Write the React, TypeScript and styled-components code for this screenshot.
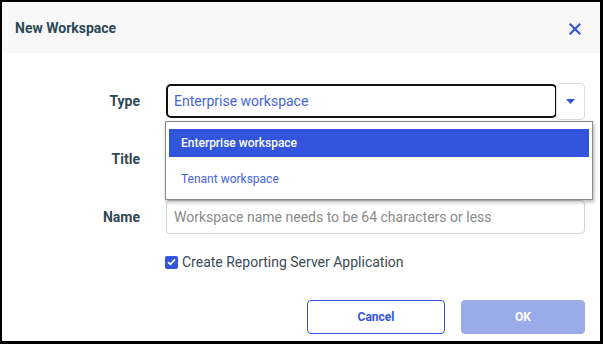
import styled, { createGlobalStyle } from 'styled-components';

const GlobalStyle = createGlobalStyle`
  html, body {
    margin: 0;
    padding: 0;
    background: #fff;
  }
  body {
    font-family: Roboto, 'Liberation Sans', sans-serif;
  }
`;

const blue = '#3355dd';
const slate = '#2f4855';

const App = () => {
  return (
    <>
      <GlobalStyle />
      <Dialog>
        <Header>
          <HeaderTitle>New Workspace</HeaderTitle>
          <CloseButton aria-label="Close">
            <svg width="12" height="12" viewBox="0 0 12 12">
              <path d="M1.5 1.5 L10.5 10.5 M10.5 1.5 L1.5 10.5" stroke={blue} strokeWidth="2.2" strokeLinecap="square" />
            </svg>
          </CloseButton>
        </Header>
        <Body>
          <FormRow>
            <Label>Type</Label>
            <Field>
              <SelectBox>Enterprise workspace</SelectBox>
              <ArrowButton>
                <svg width="9" height="5" viewBox="0 0 9 5">
                  <path d="M0 0 H9 L4.5 5 Z" fill={blue} />
                </svg>
              </ArrowButton>
              <Menu>
                <MenuItem $active>Enterprise workspace</MenuItem>
                <MenuItem>Tenant workspace</MenuItem>
              </Menu>
            </Field>
          </FormRow>
          <FormRow>
            <Label>Title</Label>
            <Field>
              <TextInput placeholder="" />
            </Field>
          </FormRow>
          <FormRow>
            <Label>Name</Label>
            <Field>
              <TextInput placeholder="Workspace name needs to be 64 characters or less" />
            </Field>
          </FormRow>
          <CheckRow>
            <CheckBox>
              <svg width="9" height="8" viewBox="0 0 9 8">
                <path d="M1 4.2 L3.4 6.4 L8 1.4" stroke="#fff" strokeWidth="1.6" fill="none" />
              </svg>
            </CheckBox>
            <CheckLabel>Create Reporting Server Application</CheckLabel>
          </CheckRow>
        </Body>
        <Footer>
          <Button>Cancel</Button>
          <Button $primary>OK</Button>
        </Footer>
      </Dialog>
    </>
  );
};

export default App;

const Dialog = styled.div`
  width: 603px;
  height: 344px;
  box-sizing: border-box;
  border: solid #000;
  border-width: 2px 3px 3px 2px;
  background: #fff;
  display: flex;
  flex-direction: column;
`;

const Header = styled.div`
  height: 51px;
  flex-shrink: 0;
  background: #f8f8f8;
  display: flex;
  align-items: center;
  justify-content: space-between;
  padding: 0 19px 0 13px;
`;

const HeaderTitle = styled.div`
  font-size: 14px;
  font-weight: 700;
  color: ${slate};
`;

const CloseButton = styled.div`
  width: 12px;
  height: 12px;
  display: flex;
  margin-top: 2px;
`;

const Body = styled.div`
  display: flex;
  flex-direction: column;
  gap: 22px;
  padding: 30px 15px 0 0;
`;

const FormRow = styled.div`
  display: grid;
  grid-template-columns: 138px 1fr;
  column-gap: 26px;
  height: 36px;
  align-items: center;
`;

const Label = styled.div`
  text-align: right;
  font-size: 14px;
  font-weight: 700;
  color: ${slate};
`;

const Field = styled.div`
  position: relative;
  display: flex;
  align-items: center;
  height: 36px;
`;

const SelectBox = styled.div`
  flex: 1;
  height: 34px;
  box-sizing: border-box;
  border: 2px solid #111;
  border-radius: 5px;
  padding: 0 6px;
  display: flex;
  align-items: center;
  font-size: 14px;
  color: #4563de;
`;

const ArrowButton = styled.div`
  width: 29px;
  height: 37px;
  box-sizing: border-box;
  margin-left: -1px;
  border: 1px solid #dcdcdc;
  border-radius: 4px;
  display: flex;
  align-items: center;
  justify-content: center;
`;

const Menu = styled.div`
  position: absolute;
  left: -1px;
  top: 38px;
  width: 428px;
  height: 79px;
  box-sizing: border-box;
  border: 1px solid #8a8a8a;
  background: #fff;
  box-shadow: 1px 2px 4px rgba(0, 0, 0, 0.3);
  padding: 7px 3px;
  display: flex;
  flex-direction: column;
  gap: 8px;
  z-index: 2;
`;

const MenuItem = styled.div<{ $active?: boolean }>`
  height: 28px;
  flex-shrink: 0;
  display: flex;
  align-items: center;
  padding-left: 12px;
  font-size: 12px;
  font-weight: ${(p) => (p.$active ? 500 : 400)};
  background: ${(p) => (p.$active ? blue : 'transparent')};
  color: ${(p) => (p.$active ? '#fff' : '#4563de')};
`;

const TextInput = styled.input`
  width: 100%;
  height: 34px;
  box-sizing: border-box;
  border: 1px solid #d4d4d4;
  border-radius: 4px;
  padding: 0 7px;
  font-family: Roboto, 'Liberation Sans', sans-serif;
  font-size: 14px;
  color: #333;
  outline: none;

  &::placeholder {
    color: #8a8a8a;
  }
`;

const CheckRow = styled.div`
  display: flex;
  align-items: center;
  gap: 4px;
  height: 20px;
  margin-top: -5px;
  padding-left: 163px;
`;

const CheckBox = styled.div`
  width: 13px;
  height: 13px;
  border-radius: 2px;
  background: ${blue};
  display: flex;
  align-items: center;
  justify-content: center;
`;

const CheckLabel = styled.div`
  font-size: 14px;
  color: #3d4a52;
`;

const Footer = styled.div`
  display: flex;
  justify-content: flex-end;
  gap: 16px;
  padding: 28px 15px 0 0;
`;

const Button = styled.div<{ $primary?: boolean }>`
  width: ${(p) => (p.$primary ? 124 : 138)}px;
  height: 34px;
  box-sizing: border-box;
  border-radius: 4px;
  border: 1px solid ${(p) => (p.$primary ? '#9aabea' : blue)};
  background: ${(p) => (p.$primary ? '#9aabea' : '#fff')};
  color: ${(p) => (p.$primary ? '#fff' : blue)};
  font-size: 12px;
  font-weight: 700;
  display: flex;
  align-items: center;
  justify-content: center;
`;
